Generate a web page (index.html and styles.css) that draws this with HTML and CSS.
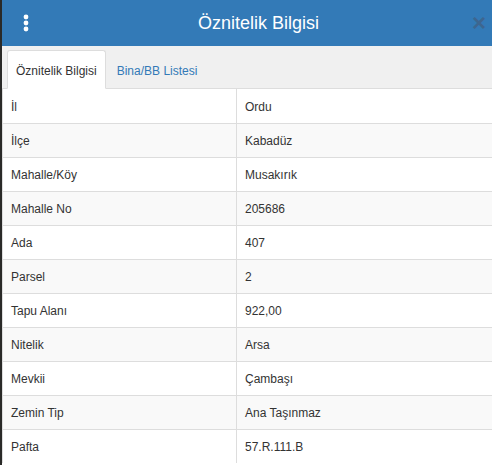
FILE: index.html
```html
<html lang="tr">
<head>
    <meta charset="UTF-8">
    <meta name="viewport" content="width=device-width, initial-scale=1.0">
    <title>Öznitelik Bilgisi</title>
    <link rel="stylesheet" href="styles.css">
</head>
<body>
    <div class="panel">
        <div class="panel-header">
            <span class="menu-btn">
                <svg width="6" height="18" viewBox="0 0 6 18">
                    <circle cx="3" cy="3" r="2.4" fill="#fff"/>
                    <circle cx="3" cy="9" r="2.4" fill="#fff"/>
                    <circle cx="3" cy="15" r="2.4" fill="#fff"/>
                </svg>
            </span>
            <h1>Öznitelik Bilgisi</h1>
            <span class="close-btn">×</span>
        </div>

        <div class="tabs">
            <a class="tab active">Öznitelik Bilgisi</a>
            <a class="tab">Bina/BB Listesi</a>
        </div>

        <table class="info-table">
            <tr><td>İl</td><td>Ordu</td></tr>
            <tr><td>İlçe</td><td>Kabadüz</td></tr>
            <tr><td>Mahalle/Köy</td><td>Musakırık</td></tr>
            <tr><td>Mahalle No</td><td>205686</td></tr>
            <tr><td>Ada</td><td>407</td></tr>
            <tr><td>Parsel</td><td>2</td></tr>
            <tr><td>Tapu Alanı</td><td>922,00</td></tr>
            <tr><td>Nitelik</td><td>Arsa</td></tr>
            <tr><td>Mevkii</td><td>Çambaşı</td></tr>
            <tr><td>Zemin Tip</td><td>Ana Taşınmaz</td></tr>
            <tr><td>Pafta</td><td>57.R.111.B</td></tr>
        </table>
    </div>
</body>
</html>
```

FILE: styles.css
```css
* {
    margin: 0;
    padding: 0;
    box-sizing: border-box;
    font-family: 'Liberation Sans', Arial, sans-serif;
}

body {
    background: #2a2a28;
    overflow: hidden;
}

.panel {
    margin-left: 2px;
    background: #fff;
    min-height: 465px;
}

.panel-header {
    height: 46px;
    background: #337ab7;
    display: flex;
    align-items: center;
    padding: 0 4px 0 21px;
    color: #fff;
}

.menu-btn {
    display: flex;
    width: 20px;
}

.panel-header h1 {
    flex: 1;
    text-align: center;
    font-size: 18px;
    font-weight: normal;
    margin-right: -2px;
}

.close-btn {
    font-size: 24px;
    font-weight: bold;
    color: #3d6690;
    width: 16px;
    line-height: 1;
}

.tabs {
    height: 43px;
    background: #f0f0f0;
    border-bottom: 1px solid #ddd;
    display: flex;
    align-items: flex-end;
    padding-left: 5px;
}

.tab {
    font-size: 12px;
    color: #337ab7;
    padding: 0 8px;
    height: 39px;
    line-height: 40px;
    border: 1px solid transparent;
    border-radius: 3px 3px 0 0;
    margin-bottom: -1px;
}

.tab.active {
    background: #fff;
    color: #333;
    border-color: #ddd;
    border-bottom-color: #fff;
    margin-right: 2px;
}

.info-table {
    width: 100%;
    border-collapse: collapse;
    border-left: 1px solid #ddd;
}

.info-table td {
    height: 34px;
    font-size: 12px;
    color: #333;
    padding: 2px 8px 0;
    border-top: 1px solid #ddd;
    vertical-align: middle;
}

.info-table td:first-child {
    width: 234px;
    border-right: 1px solid #ddd;
}

.info-table tr:first-child td {
    border-top: none;
}

.info-table tr:nth-child(even) td {
    background: #f9f9f9;
}
```
